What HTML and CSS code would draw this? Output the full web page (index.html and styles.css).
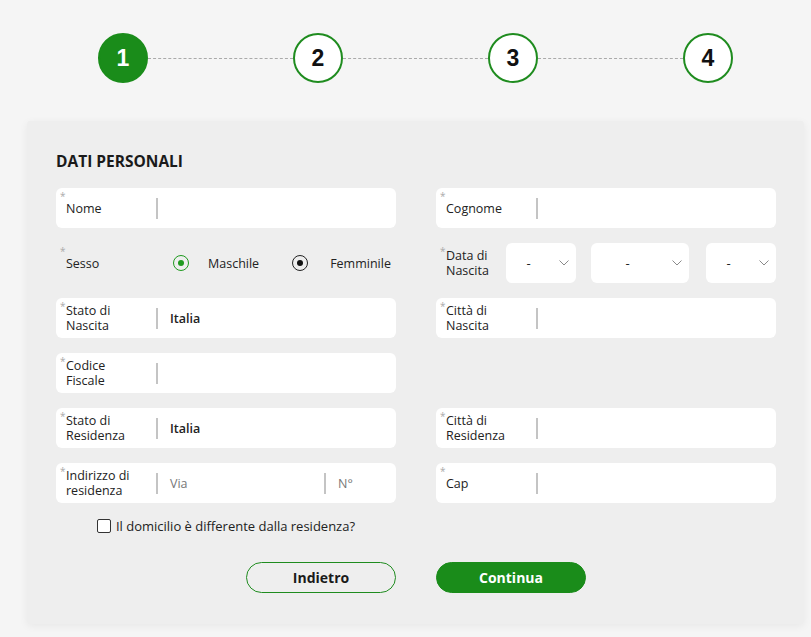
FILE: index.html
```html
<!DOCTYPE html>
<html lang="it">
<head>
<meta charset="utf-8">
<title>Dati personali</title>
<link rel="stylesheet" href="styles.css">
</head>
<body>
<div class="stepper">
  <div class="step active">1</div>
  <div class="step-line"></div>
  <div class="step">2</div>
  <div class="step-line"></div>
  <div class="step">3</div>
  <div class="step-line"></div>
  <div class="step">4</div>
</div>

<div class="card">
  <h2 class="title">DATI PERSONALI</h2>
  <div class="grid">
    <div class="field">
      <span class="req">*</span>
      <span class="label">Nome</span>
      <span class="sep"></span>
      <span class="value"></span>
    </div>
    <div class="field">
      <span class="req">*</span>
      <span class="label">Cognome</span>
      <span class="sep"></span>
      <span class="value"></span>
    </div>

    <div class="plain">
      <span class="req">*</span>
      <span class="label">Sesso</span>
      <div class="radios">
        <span class="radio green"><span class="dot"></span></span>
        <span class="radio-text">Maschile</span>
        <span class="radio black"><span class="dot"></span></span>
        <span class="radio-text">Femminile</span>
      </div>
    </div>
    <div class="plain date-row">
      <span class="req">*</span>
      <span class="label date-label">Data di Nascita</span>
      <div class="select s-small"><span class="sel-val">-</span><svg class="chev" width="10" height="6" viewBox="0 0 10 6"><path d="M0.5 0.5 L5 5 L9.5 0.5" fill="none" stroke="#8a8a8a" stroke-width="1"/></svg></div>
      <div class="select s-mid"><span class="sel-val">-</span><svg class="chev" width="10" height="6" viewBox="0 0 10 6"><path d="M0.5 0.5 L5 5 L9.5 0.5" fill="none" stroke="#8a8a8a" stroke-width="1"/></svg></div>
      <div class="select s-small"><span class="sel-val">-</span><svg class="chev" width="10" height="6" viewBox="0 0 10 6"><path d="M0.5 0.5 L5 5 L9.5 0.5" fill="none" stroke="#8a8a8a" stroke-width="1"/></svg></div>
    </div>

    <div class="field">
      <span class="req">*</span>
      <span class="label">Stato di Nascita</span>
      <span class="sep"></span>
      <span class="value strong">Italia</span>
    </div>
    <div class="field">
      <span class="req">*</span>
      <span class="label">Città di Nascita</span>
      <span class="sep"></span>
      <span class="value"></span>
    </div>

    <div class="field">
      <span class="req">*</span>
      <span class="label">Codice Fiscale</span>
      <span class="sep"></span>
      <span class="value"></span>
    </div>
    <div class="empty"></div>

    <div class="field">
      <span class="req">*</span>
      <span class="label">Stato di Residenza</span>
      <span class="sep"></span>
      <span class="value strong">Italia</span>
    </div>
    <div class="field">
      <span class="req">*</span>
      <span class="label">Città di Residenza</span>
      <span class="sep"></span>
      <span class="value"></span>
    </div>

    <div class="field">
      <span class="req">*</span>
      <span class="label">Indirizzo di residenza</span>
      <span class="sep"></span>
      <span class="value ph via">Via</span>
      <span class="sep"></span>
      <span class="value ph">N°</span>
    </div>
    <div class="field">
      <span class="req">*</span>
      <span class="label">Cap</span>
      <span class="sep"></span>
      <span class="value"></span>
    </div>

    <div class="check-row">
      <span class="checkbox"></span>
      <span class="check-text">Il domicilio è differente dalla residenza?</span>
    </div>
    <div class="empty"></div>

    <div class="btn-cell left"><button class="btn outline">Indietro</button></div>
    <div class="btn-cell"><button class="btn filled">Continua</button></div>
  </div>
</div>
</body>
</html>
```

FILE: styles.css
```css
* { box-sizing: border-box; }

body {
  margin: 0;
  background: #f5f5f5;
  font-family: "Open Sans", "DejaVu Sans", sans-serif;
  color: #222;
  width: 811px;
  height: 637px;
  overflow: hidden;
}

.stepper {
  display: flex;
  align-items: center;
  width: 635px;
  margin-left: 98px;
  padding-top: 33px;
}

.step {
  width: 50px;
  height: 50px;
  flex: 0 0 50px;
  border-radius: 50%;
  border: 2px solid #1f8c1f;
  background: #fff;
  display: flex;
  align-items: center;
  justify-content: center;
  font-family: "Liberation Sans", Arial, sans-serif;
  font-weight: 700;
  font-size: 23px;
  color: #111;
}

.step.active {
  background: #1a8c1a;
  border-color: #1a8c1a;
  color: #fff;
}

.step-line {
  flex: 1;
  height: 0;
  border-top: 1px dashed #aaa;
}

.card {
  margin: 38px 0 0 27px;
  width: 777px;
  background: #eeeeee;
  border-radius: 3px;
  box-shadow: 0 2px 8px rgba(0,0,0,0.06);
  padding: 29px 28px 31px 29px;
}

.title {
  margin: 0 0 16px 0;
  font-size: 15.5px;
  line-height: 22px;
  font-weight: 700;
  color: #1a1a1a;
}

.grid {
  display: grid;
  grid-template-columns: 340px 340px;
  column-gap: 40px;
  row-gap: 15px;
}

.field, .plain {
  position: relative;
  height: 40px;
  display: flex;
  align-items: center;
}

.field {
  background: #fff;
  border-radius: 6px;
}

.req {
  position: absolute;
  left: 4px;
  top: 3px;
  font-size: 10px;
  line-height: 10px;
  color: #aaa;
}

.label {
  flex: 0 0 100px;
  width: 100px;
  padding-left: 10px;
  padding-right: 24px;
  font-size: 12.5px;
  line-height: 15px;
  color: #222;
}

.sep {
  flex: 0 0 2px;
  width: 2px;
  height: 21px;
  background: #c4c4c4;
}

.value {
  flex: 1;
  padding-left: 12px;
  font-size: 12.5px;
  color: #222;
}

.value.strong { font-weight: 600; }
.value.ph { color: #777; }
.value.via { flex: 0 0 166px; }

.radios {
  display: flex;
  align-items: center;
  margin-left: 17px;
}

.radio {
  width: 16px;
  height: 16px;
  border-radius: 50%;
  border: 1.5px solid #222;
  display: flex;
  align-items: center;
  justify-content: center;
}

.radio .dot {
  width: 6px;
  height: 6px;
  border-radius: 50%;
  background: #111;
}

.radio.green { border-color: #1f9a1f; }
.radio.green .dot { background: #1f9a1f; }

.radio-text {
  font-size: 12.5px;
  color: #222;
  margin-left: 19px;
  margin-right: 33px;
}

.radio-text:last-child { margin-left: 22px; }

.date-row .date-label {
  flex: 0 0 70px;
  width: 70px;
  padding-right: 0;
}

.select {
  height: 40px;
  background: #fff;
  border-radius: 6px;
  display: flex;
  align-items: center;
  position: relative;
}

.s-small { width: 70px; }
.s-mid { width: 98px; margin: 0 17px 0 15px; }

.sel-val {
  flex: 1;
  text-align: center;
  padding-right: 25px;
  font-size: 13px;
  color: #222;
}

.chev {
  position: absolute;
  right: 7px;
  top: 17px;
}

.check-row {
  display: flex;
  align-items: center;
  justify-content: center;
  height: 16px;
}

.checkbox {
  width: 14px;
  height: 14px;
  border: 1.5px solid #333;
  border-radius: 2px;
  background: #fff;
  margin-right: 5px;
}

.check-text {
  font-size: 13px;
  color: #222;
}

.btn-cell {
  display: flex;
  margin-top: 13px;
}

.btn-cell.left { justify-content: flex-end; }

.btn {
  width: 150px;
  height: 31px;
  border-radius: 16px;
  font-family: "Open Sans", "DejaVu Sans", sans-serif;
  font-weight: 700;
  font-size: 14px;
  cursor: pointer;
}

.btn.outline {
  background: transparent;
  border: 1px solid #1f8c1f;
  color: #1a1a1a;
}

.btn.filled {
  background: #1a8c1a;
  border: 1px solid #1a8c1a;
  color: #fff;
}
```
